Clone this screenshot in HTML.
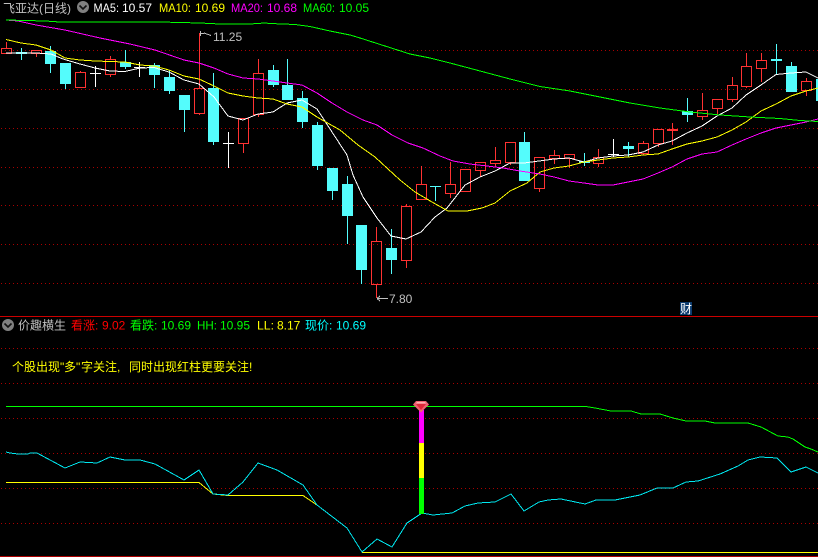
<!DOCTYPE html>
<html><head><meta charset="utf-8"><title>飞亚达(日线)</title>
<style>
html,body{margin:0;padding:0;background:#000;width:818px;height:557px;overflow:hidden}
svg{display:block;position:absolute;left:0;top:0}
text{font-family:"Liberation Sans","Noto Sans CJK SC",sans-serif;font-size:12px}
.l{fill:none;stroke-width:1;shape-rendering:crispEdges}
.c{shape-rendering:crispEdges}
</style></head><body>
<svg width="818" height="557" viewBox="0 0 818 557" xmlns="http://www.w3.org/2000/svg">
<rect width="818" height="557" fill="#000"/>
<!-- grid -->
<path class="c" d="M1 50.5H818M1 89.5H818M1 128.5H818M1 167.5H818M1 205.5H818M1 244.5H818M1 283.5H818M1 348.5H818M1 383.5H818M1 418.5H818M1 453.5H818M1 488.5H818M1 523.5H818" stroke="#aa0000" stroke-dasharray="1 3" fill="none"/>
<path class="c" d="M0 316.5H818" stroke="#cc0000" fill="none"/>
<path class="c" d="M0 556.5H818" stroke="#aa0000" fill="none"/>
<!-- cyan candles -->
<path class="c" fill="#54fcfc" d="M45 51h11v13h-11zM60 63h11v21h-11zM120 62h11v5h-11zM149 65h11v10h-11zM164 77h11v14h-11zM179 95h11v15h-11zM208 88h11v54h-11zM268 70h11v15h-11zM282 85h11v15h-11zM297 98h11v24h-11zM312 125h11v41h-11zM327 168h11v23h-11zM342 184h11v32h-11zM356 225h11v45h-11zM386 248h11v12h-11zM519 142h11v39h-11zM682 111h11v4h-11zM786 66h11v26h-11zM816 79h2v22h-2zM579 161h11v2h-11zM623 146h11v3h-11zM16 52h11v2h-11zM771 59h11v2h-11zM430 186h11v1h-11z"/>
<path class="l" stroke="#54fcfc" d="M21.5 48V60M50.5 46V73M65.5 84V89M125.5 50V69M154.5 63V88M169.5 70V94M184.5 110V132M213.5 73V145M273.5 65V87M287.5 59V85M302.5 91V128M317.5 122V170M332.5 191V200M347.5 176V244M361.5 270V284M391.5 229V274M435.5 186V201M524.5 132V142M584.5 153V166M628.5 142V157M687.5 98V122M776.5 44V74M791.5 62V66"/>
<!-- white doji -->
<path class="l" stroke="#fff" d="M95.5 66V87M90 73.5H101M139.5 62V77M134 67.5H145M228.5 132V168M223 143.5H234M613.5 139V157M608 154.5H619"/>
<!-- red candles -->
<path class="l" stroke="#ff3232" d="M6.5 42V48M1.5 48.5H11.5V53.5H1.5ZM36.5 53V57M31.5 50.5H41.5V53.5H31.5ZM80.5 71V72M80.5 87V88M75.5 72.5H85.5V87.5H75.5ZM110.5 56V59M110.5 74V77M105.5 59.5H115.5V74.5H105.5ZM199.5 33V88M199.5 113V115M194.5 88.5H204.5V113.5H194.5ZM243.5 143V153M238.5 118.5H248.5V143.5H238.5ZM258.5 59V73M258.5 114V117M253.5 73.5H263.5V114.5H253.5ZM376.5 227V241M376.5 284V298M371.5 241.5H381.5V284.5H371.5ZM406.5 204V206M406.5 260V268M401.5 206.5H411.5V260.5H401.5ZM421.5 166V184M416.5 184.5H426.5V199.5H416.5ZM450.5 162V184M450.5 193V198M445.5 184.5H455.5V193.5H445.5ZM460.5 169.5H470.5V191.5H460.5ZM480.5 170V177M475.5 162.5H485.5V170.5H475.5ZM495.5 147V160M495.5 163V167M490.5 160.5H500.5V163.5H490.5ZM510.5 162V165M505.5 142.5H515.5V162.5H505.5ZM539.5 188V192M534.5 157.5H544.5V188.5H534.5ZM554.5 150V155M554.5 158V164M549.5 155.5H559.5V158.5H549.5ZM569.5 158V168M564.5 154.5H574.5V158.5H564.5ZM598.5 149V157M598.5 163V167M593.5 157.5H603.5V163.5H593.5ZM643.5 141V143M643.5 153V155M638.5 143.5H648.5V153.5H638.5ZM658.5 143V147M653.5 129.5H663.5V143.5H653.5ZM672.5 123V145M667 129.5H678M667 130.5H678M702.5 93V110M702.5 116V120M697.5 110.5H707.5V116.5H697.5ZM717.5 108V114M712.5 99.5H722.5V108.5H712.5ZM732.5 77V85M732.5 99V102M727.5 85.5H737.5V99.5H727.5ZM746.5 53V66M746.5 86V88M741.5 66.5H751.5V86.5H741.5ZM761.5 53V60M761.5 68V82M756.5 60.5H766.5V68.5H756.5ZM806.5 78V81M806.5 90V96M801.5 81.5H811.5V90.5H801.5Z"/>
<!-- MA lines -->
<polyline class="l" stroke="#fff" points="6,53 21,53 36,53 51,54 63,59 80,64 95,68 110,71 125,71.5 140,68 154,67.5 169,72 184,80 199,84 214,97 228,116 243,120 258,114 273,112 287,103 302,100 317,109 332,132 347,155 353,175 363,197 377,218 391,236 406,239 421,232 435,217 447,208 465,185 480,177 495,171 510,163 524,163 539,161 554,159 569,158 584,162 598,158 613,156 628,155 643,152 658,145 672,141 687,133 702,126 717,116 732,108 746,95 761,85 776,74.5 791,73 806,72 818,78"/>
<polyline class="l" stroke="#ff0" points="6,39.5 21,43 36,45 51,50 65,58 80,60 95,61 110,61.5 125,62 140,65 154,66 169,70 184,76 199,79 214,86 228,93 243,96 258,98 273,99 287,104 302,107 317,117 340,130 358,145 375,157 400,180 415,192 432,202 448,211 467,211 482,208 495,203 510,191 527,183 540,172 554,168 569,166 584,162 598,160 613,158 628,157 643,155 658,154 672,149 687,144 702,141 717,137 732,130 746,122 761,111 776,104 791,96 806,91 818,88"/>
<polyline class="l" stroke="#f0f" points="6,20 18,21 36,25 65,30 100,38 130,44 155,50 184,60 199,63 214,68 228,74 243,78 258,79 273,81 287,83 302,85 317,93 332,103 347,112 363,120 377,125 392,135 408,143 423,148 440,156 453,161 470,164 487,166 503,168 520,171 540,174 554,177 569,181 584,183 598,185 613,185 628,182 643,179 658,173 672,167 687,159 702,154 717,152 732,145 746,139 761,133 776,128 791,125 806,122 818,119"/>
<polyline class="l" stroke="#0f0" points="6,20 45,21 60,22 160,22 200,23 220,24 250,24 265,23 270,23.5 295,24.5 310,26.5 330,31 350,35 360,38 385,46 410,54 430,58 450,63 480,71 510,79 540,86.5 570,91 600,97 630,103 660,108 690,112 720,115 750,117 780,118.5 800,120.5 818,121.5"/>
<!-- labels top -->
<text x="3" y="12.5" fill="#c0c0c0">飞亚达(日线)</text>
<circle cx="83" cy="7" r="6" fill="#808080"/>
<path d="M79.5 5.5L83 9L86.5 5.5" stroke="#111" stroke-width="1.6" fill="none"/>
<text x="93.5" y="12" fill="#fff" textLength="25.5" lengthAdjust="spacingAndGlyphs">MA5:</text><text x="122" y="12" fill="#fff">10.57</text>
<text x="159" y="12" fill="#ff0" textLength="32" lengthAdjust="spacingAndGlyphs">MA10:</text><text x="195" y="12" fill="#ff0">10.69</text>
<text x="231" y="12" fill="#f0f" textLength="32" lengthAdjust="spacingAndGlyphs">MA20:</text><text x="267" y="12" fill="#f0f">10.68</text>
<text x="303" y="12" fill="#0f0" textLength="32" lengthAdjust="spacingAndGlyphs">MA60:</text><text x="339" y="12" fill="#0f0">10.05</text>
<!-- high low -->
<path class="l" stroke="#c0c0c0" d="M200 33.5H204M200.5 31V36M204 33L211 35.5"/>
<text x="213" y="41" fill="#c0c0c0">11.25</text>
<path class="l" stroke="#c0c0c0" d="M377 298.5H388M377 298.5L380 296M377 298.5L380 301"/>
<text x="389" y="303" fill="#c0c0c0">7.80</text>
<!-- badge -->
<rect x="680" y="302" width="12" height="13" fill="#0a3a6e"/>
<text x="680" y="313" fill="#fff">财</text>
<!-- lower title -->
<circle cx="8" cy="325" r="6" fill="#808080"/>
<path d="M4.5 323.5L8 327L11.5 323.5" stroke="#111" stroke-width="1.6" fill="none"/>
<text x="18" y="329.5" fill="#c0c0c0">价趣横生</text>
<text x="71" y="329.5" fill="#f00">看涨:</text><text x="102" y="329.5" fill="#f00">9.02</text>
<text x="130" y="329.5" fill="#0f0">看跌:</text><text x="161" y="329.5" fill="#0f0">10.69</text>
<text x="197" y="329.5" fill="#0f0" textLength="20" lengthAdjust="spacingAndGlyphs">HH:</text><text x="220" y="329.5" fill="#0f0">10.95</text>
<text x="257" y="329.5" fill="#ff0" textLength="17" lengthAdjust="spacingAndGlyphs">LL:</text><text x="277" y="329.5" fill="#ff0">8.17</text>
<text x="305" y="329.5" fill="#0ff">现价:</text><text x="336" y="329.5" fill="#0ff">10.69</text>
<text x="12" y="371" fill="#ff0">个股出现</text><text x="60" y="371" fill="#ff0">"</text><text x="64" y="371" fill="#ff0">多</text><text x="76" y="371" fill="#ff0">"</text><text x="81" y="371" fill="#ff0">字关注,</text><text x="129" y="371" fill="#ff0">同时出现红柱更要关注!</text>
<!-- lower lines -->
<polyline class="l" stroke="#0f0" points="6,406.5 586,406.5 595,408 611,411 631,411 641,414 660,414 673,418 686,421 705,421 715,423 748,423 761,427 778,436 788,437 793,439 805,447 811,449 818,452"/>
<polyline class="l" stroke="#ff0" points="6,482.5 199,482.5 213,494 228,495.5 303,495.5 317,505"/>
<polyline class="l" stroke="#ff0" points="362,552.5 818,552.5"/>
<polyline class="l" stroke="#00e8f0" points="6,452 10,453 18,454 28,454 30,453 37,453 65,468 80,462 97,463 110,457 125,460 140,460 155,464 184,480 199,470 213,494 228,495 243,482 258,463 277,470 303,485 317,505 347,528 362,552 377,539 392,547 407,523 422,513 433,515 452,513 465,506 478,503 495,502 511,494 524,511 539,502 548,500 561,499 585,504 596,500 615,500 640,495 657,488 673,488 686,482 698,481 720,474 738,466 748,460 760,457 777,458 791,472 806,467 818,473"/>
<!-- bar -->
<rect x="419" y="410" width="5" height="33" fill="#f0f"/>
<rect x="419" y="443" width="5" height="35" fill="#ff0"/>
<rect x="419" y="478" width="5" height="36" fill="#0f0"/>
<!-- gem -->
<path d="M416 401H426L429 404.5L421 412.5L413 404.5Z" fill="#f06070"/>
<path d="M416 404H426L421 410Z" fill="#e02838"/>
<path d="M417 402H425L426 403.5H416Z" fill="#ffb0b0"/>
</svg>
</body></html>
